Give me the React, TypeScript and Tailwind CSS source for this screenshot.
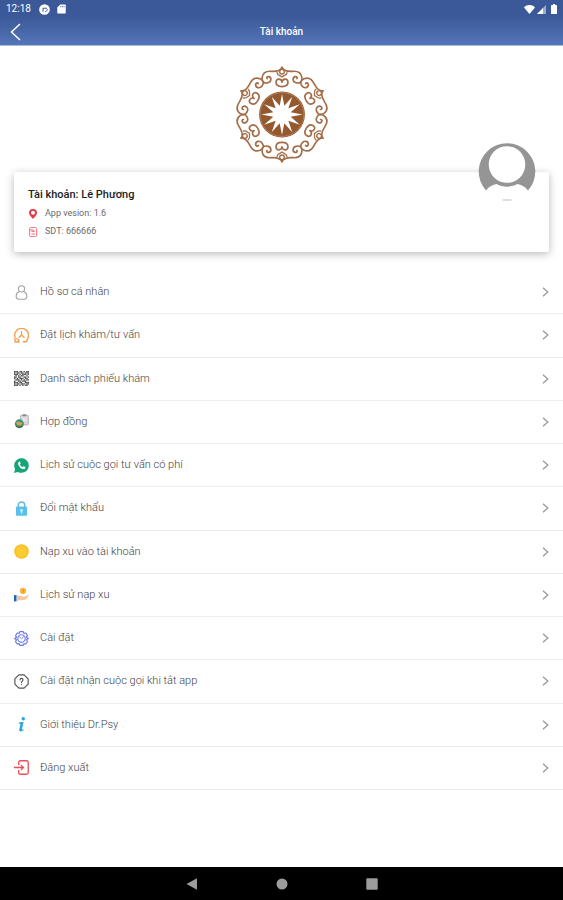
import type { ReactNode } from "react";

const SECTORS = [0, 60, 120, 180, 240, 300];

const starPoints = Array.from({ length: 24 }, (_, i) => {
  const r = i % 2 === 0 ? 62 : 27;
  const a = (i * Math.PI) / 12;
  return `${(Math.sin(a) * r).toFixed(1)},${(-Math.cos(a) * r).toFixed(1)}`;
}).join(" ");

function ScrollHalf() {
  return (
    <path d="M0-142C-6-128-22-130-32-130C-44-131-58-127-60-111C-61-98-54-94-45-95C-32-96-30-110-39-114C-45-115-47-111-45-108" />
  );
}

function Logo() {
  return (
    <svg viewBox="-144 -146 288 292" className="h-[97px] w-24" role="img" aria-label="Logo">
      <g fill="none" stroke="#a26d48" strokeWidth="5" strokeLinecap="round">
        {SECTORS.map((a) => (
          <g key={a} transform={`rotate(${a})`}>
            <ScrollHalf />
            <g transform="scale(-1 1)">
              <ScrollHalf />
            </g>
            <circle cy="-129" r="7" strokeWidth="4" />
            <path d="M-15-126C-14-117-5-117 0-113C5-117 14-117 15-126" strokeWidth="4" />
            <path d="M0-97C-1-108-18-111-18-97C-18-86-8-84 0-84C8-84 18-86 18-97C18-111 1-108 0-97" />
          </g>
        ))}
      </g>
      <circle r="69" fill="#95592f" />
      <circle r="66" fill="none" stroke="#b0805c" strokeWidth="3" />
      <polygon points={starPoints} fill="#fff" />
    </svg>
  );
}

function Icon({ children }: { children: ReactNode }) {
  return (
    <svg viewBox="0 0 14 14" className="size-[15px] shrink-0" fill="none" aria-hidden="true">
      {children}
    </svg>
  );
}

const QR_ROWS = [
  "11101101011",
  "10110110111",
  "11101011101",
  "01010110010",
  "11011001101",
  "10101110110",
  "01110101011",
  "10011011100",
  "11101100111",
  "10110111011",
  "11101010110",
];

const items: { label: string; icon: ReactNode }[] = [
  {
    label: "Hồ sơ cá nhân",
    icon: (
      <g stroke="#a3a3a3" strokeWidth="1">
        <circle cx="7" cy="3.6" r="2.9" />
        <path d="M4.6 6.4C2.6 7.2 2 8.8 2 10.6C2 12.6 3 13.3 4.4 13.3H9.6C11 13.3 12 12.6 12 10.6C12 8.8 11.4 7.2 9.4 6.4" />
      </g>
    ),
  },
  {
    label: "Đặt lịch khám/tư vấn",
    icon: (
      <g stroke="#f5a04f" strokeWidth="1.3" strokeLinecap="round" strokeLinejoin="round">
        <path d="M1 8.4C.2 5.8 1 3.4 3 1.8C5.4.1 8.8.1 11.2 1.8C13.6 3.6 13.8 7 13 9.4C12.6 10.6 12.2 11.4 11.6 12.4" />
        <path d="M7 3.4V6.6L4.8 8.6M7 6.6L9.4 8.6" />
        <path d="M1 9.6V13H4.6C4.8 11.4 4 10.4 2.6 10.2" />
        <path d="M8.6 12.8H11.4" />
      </g>
    ),
  },
  {
    label: "Danh sách phiếu khám",
    icon: (
      <g fill="#4a4a4a">
        {QR_ROWS.map((row, y) =>
          row.split("").map((c, x) =>
            c === "1" ? <rect key={`${x}-${y}`} x={x * 1.27} y={y * 1.27} width="1.27" height="1.27" /> : null,
          ),
        )}
      </g>
    ),
  },
  {
    label: "Hợp đồng",
    icon: (
      <g>
        <rect x="6" y="1.2" width="7.4" height="9" rx="0.8" fill="#d9d5da" stroke="#a9a3ab" strokeWidth="0.7" />
        <rect x="8" y="0.3" width="3.4" height="1.8" rx="0.6" fill="#8f878f" />
        <path d="M8 4.4H12M8 6.2H12" stroke="#f6f6f6" strokeWidth="0.8" />
        <circle cx="5" cy="9.2" r="4.2" fill="#2f9a6c" />
        <path d="M1.8 8.2L4.4 6.8L8.2 8.6L6 10.8L3.4 10.4Z" fill="#dd9a63" />
        <path d="M2 11.4C3.6 12.4 6.4 12.4 8 11.2" stroke="#8b3b3b" strokeWidth="0.8" />
      </g>
    ),
  },
  {
    label: "Lịch sử cuộc gọi tư vấn có phí",
    icon: (
      <g>
        <path d="M.1 13.9L1 10.3A6.8 6.8 0 1 1 3.7 13Z" fill="#16a577" />
        <path
          d="M4.6 3.5C5.2 3.1 5.6 3.4 5.8 4L6.2 5C6.3 5.5 5.6 5.9 5.6 6.2C6.1 7.3 7 8 8 8.4C8.4 8.3 8.7 7.5 9.2 7.7L10.4 8.3C11 8.7 10.6 9.7 9.9 10.1C8.8 10.8 7 10 5.7 8.8C4.4 7.6 3.7 6.2 3.8 5C3.8 4.4 4.1 3.8 4.6 3.5Z"
          fill="#fff"
        />
      </g>
    ),
  },
  {
    label: "Đổi mật khẩu",
    icon: (
      <g>
        <path d="M4 6V3.8C4 0 10 0 10 3.8V6" stroke="#5fb9df" strokeWidth="1.4" />
        <rect x="1.8" y="5.2" width="10.4" height="8.6" rx="0.7" fill="#5cc1ea" />
        <circle cx="7" cy="8.6" r="1.2" fill="#d6f0fa" />
        <path d="M6.4 9H7.6V11.6H6.4Z" fill="#d6f0fa" />
      </g>
    ),
  },
  {
    label: "Nạp xu vào tài khoản",
    icon: (
      <g>
        <circle cx="7" cy="7" r="6.8" fill="#f6bf2c" />
        <circle cx="7" cy="7" r="5.4" fill="#fccb32" />
      </g>
    ),
  },
  {
    label: "Lịch sử nạp xu",
    icon: (
      <g>
        <circle cx="8.4" cy="3.6" r="3" fill="#f9b53e" />
        <path d="M8.6 2.2V5" stroke="#ef8e2c" strokeWidth="1" />
        <path d="M0 7.6H2.4V13.4H0Z" fill="#1f62b4" />
        <path d="M2.4 7.6H3.4V13H2.4Z" fill="#8fc4ee" />
        <path d="M3.4 8.4C5 7.6 6.4 8.6 8.8 9C10.4 9.2 12.2 7.6 13.8 7.2C13.4 9.4 11.6 11.8 9 12.2C7 12.5 5 12.3 3.4 12.4Z" fill="#f5c6a0" />
      </g>
    ),
  },
  {
    label: "Cài đặt",
    icon: (
      <g stroke="#6a79e6" strokeWidth="1.1" strokeLinejoin="round">
        <path d="M5.4.6H8.6L9.2 2.2L11 1.9L12.6 4.4L11.6 5.8L13.4 7L11.6 8.2L12.6 9.8L11 12.1L9.2 11.8L8.6 13.4H5.4L4.8 11.8L3 12.1L1.4 9.8L2.4 8.2L.6 7L2.4 5.8L1.4 4.4L3 1.9L4.8 2.2Z" />
        <circle cx="7" cy="7" r="3.5" />
        <path d="M4.6 5L7 7.2L9.4 5" strokeWidth="0.8" />
      </g>
    ),
  },
  {
    label: "Cài đặt nhận cuộc gọi khi tắt app",
    icon: (
      <g stroke="#555" strokeWidth="1.1" strokeLinecap="round">
        <path d="M4.6.8H9.4L13.2 4.6V9.4L9.4 13.2H4.6L.8 9.4V4.6Z" strokeLinejoin="round" />
        <path d="M5.6 5.4C5.6 3.6 8.4 3.6 8.4 5.4C8.4 6.6 7 6.6 7 8M7 9.8V9.9" />
      </g>
    ),
  },
  {
    label: "Giới thiệu Dr.Psy",
    icon: (
      <g fill="#2aa5e0">
        <circle cx="8.6" cy="1.7" r="1.6" />
        <path d="M4.6 5.2L9 4.4L7.4 11.2C7.3 12 8 11.8 9 11.2L8.8 12.4C7.6 13.6 4.6 14.2 4.9 11.8L6 6.6L4.5 6Z" />
      </g>
    ),
  },
  {
    label: "Đăng xuất",
    icon: (
      <g stroke="#ee4b52" strokeWidth="1.2" strokeLinecap="round" strokeLinejoin="round">
        <path d="M4.4 4.2V2.2C4.4 1.2 5 .7 6 .7H11.6C12.8.7 13.3 1.3 13.3 2.4V11.6C13.3 12.7 12.8 13.3 11.6 13.3H6C5 13.3 4.4 12.8 4.4 11.8V9.8" />
        <path d="M.4 7H8.8M6.8 5L8.8 7L6.8 9" />
      </g>
    ),
  },
];

function StatusBar() {
  return (
    <div className="flex h-[18px] items-center px-[6px] text-white">
      <span className="text-[10px] leading-[18px]">12:18</span>
      <svg viewBox="0 0 12 12" className="ml-[8px] size-[11px]" aria-hidden="true">
        <circle cx="6" cy="6" r="5.8" fill="#fff" />
        <path d="M4.4 8.4V4.6H8.6" fill="none" stroke="#3c5a9b" strokeWidth="1.1" />
        <path d="M6.6 8.6C8.4 8.2 9.2 7 9 5.4" fill="none" stroke="#3c5a9b" strokeWidth="1" />
      </svg>
      <svg viewBox="0 0 10 11" className="ml-[7px] h-[10px] w-[9px]" aria-hidden="true">
        <path d="M3.6.5H9Q9.7.5 9.7 1.2V9.8Q9.7 10.5 9 10.5H1Q.3 10.5.3 9.8V3.8Z" fill="#fff" />
        <path d="M4.2 2V3.6M6 2V3.6M7.8 2V3.6" stroke="#3c5a9b" strokeWidth="0.8" />
      </svg>
      <div className="ml-auto flex items-center gap-[2px]">
        <svg viewBox="0 0 11 9" className="h-[9px] w-[11px]" aria-hidden="true">
          <path d="M0 2.4C3-.7 8-.7 11 2.4L5.5 9Z" fill="#fff" />
        </svg>
        <svg viewBox="0 0 9 9" className="size-[9px]" aria-hidden="true">
          <path d="M0 9L9 0V9Z" fill="#fff" fillOpacity="0.5" />
          <path d="M0 9L6 3V9Z" fill="#fff" />
        </svg>
        <svg viewBox="0 0 6 10" className="ml-[3px] h-[10px] w-[6px]" aria-hidden="true">
          <path d="M2 0H4V1H5.4Q6 1 6 1.6V9.4Q6 10 5.4 10H.6Q0 10 0 9.4V1.6Q0 1 .6 1H2Z" fill="#fff" />
        </svg>
      </div>
    </div>
  );
}

export default function App() {
  return (
    <div className="flex min-h-screen flex-col bg-white font-['Roboto','Noto_Sans',sans-serif] text-[#3f3f3f]">
      <header className="bg-linear-to-b from-[#3b5998] from-35% to-[#5676ba]">
        <StatusBar />
        <div className="grid h-[28px] grid-cols-[1fr_auto_1fr] items-center border-b border-[#a9bade] px-[10px]">
          <button type="button" aria-label="Quay lại" className="justify-self-start">
            <svg viewBox="0 0 11 18" className="h-[18px] w-[11px]" fill="none" aria-hidden="true">
              <path d="M10 1L1.5 9L10 17" stroke="#fff" strokeWidth="1.5" />
            </svg>
          </button>
          <h1 className="text-[10px] leading-4 font-medium text-white">Tài khoản</h1>
        </div>
      </header>

      <main className="flex-1">
        <div className="flex justify-center pt-5">
          <Logo />
        </div>

        <section className="relative mx-[14px] mt-[9px] rounded-[2px] bg-white px-[14px] pt-[14px] pb-[11px] shadow-[0_2px_8px_rgba(0,0,0,0.28)]">
          <h2 className="text-[11px] leading-[18px] font-medium text-[#222]">Tài khoản: Lê Phương</h2>
          <p className="flex h-[19px] items-center gap-[7px] text-[9px] text-[#6a6a6a]">
            <svg viewBox="0 0 10 10" className="size-[10px]" aria-hidden="true">
              <path
                d="M5 10C3.4 7.8 1 6.4 1 3.8A4 3.8 0 0 1 9 3.8C9 6.4 6.6 7.8 5 10ZM5 1.8A2 2 0 1 0 5 5.8A2 2 0 1 0 5 1.8Z"
                fill="#ea3843"
                fillRule="evenodd"
              />
            </svg>
            App vesion: 1.6
          </p>
          <p className="flex h-[18px] items-center gap-[7px] text-[9px] text-[#6a6a6a]">
            <svg viewBox="0 0 10 10" className="size-[10px]" fill="none" stroke="#f0646c" strokeWidth="0.9" aria-hidden="true">
              <rect x="1.6" y="0.6" width="7" height="8.8" rx="1" />
              <path d="M1.6 3H5.4L6.6 4.4H3.4M3.4 7H7" />
            </svg>
            SDT: 666666
          </p>
          <svg
            viewBox="0 0 58 60"
            className="absolute -top-[30px] right-[13px] h-[60px] w-[58px]"
            role="img"
            aria-label="Ảnh đại diện"
          >
            <circle cx="29" cy="30" r="28" fill="#fff" />
            <path
              d="M8 48.5A28.3 28.3 0 1 1 50 48.5C47 44.5 43 42.5 39.5 42C33 45.5 25 45.5 18.5 42C15 42.5 11 44.5 8 48.5Z"
              fill="#959595"
            />
            <circle cx="29" cy="22.5" r="18.3" fill="#fff" />
            <path d="M24.5 58H33.5" fill="none" stroke="#bbb" strokeWidth="1" />
          </svg>
        </section>

        <ul className="mt-[19px] grid h-[519px] auto-rows-fr">
          {items.map((item) => (
            <li key={item.label} className="border-b border-[#ededed]">
              <button type="button" className="flex h-full w-full items-center px-[14px] text-left">
                <Icon>{item.icon}</Icon>
                <span className="ml-[11px] flex-1 text-[11px] leading-4 font-light">{item.label}</span>
                <svg viewBox="0 0 7 10" className="h-[10px] w-[7px]" fill="none" aria-hidden="true">
                  <path d="M1 .7L5.8 5L1 9.3" stroke="#999" strokeWidth="1.3" />
                </svg>
              </button>
            </li>
          ))}
        </ul>
      </main>

      <nav className="flex h-[33px] items-center justify-center gap-[78px] bg-black">
        <button type="button" aria-label="Trở lại">
          <svg viewBox="0 0 12 12" className="size-3" aria-hidden="true">
            <path d="M.5 6L11 .3V11.7Z" fill="#9c9c9c" />
          </svg>
        </button>
        <button type="button" aria-label="Màn hình chính">
          <svg viewBox="0 0 12 12" className="size-3" aria-hidden="true">
            <circle cx="6" cy="6" r="5.5" fill="#9c9c9c" />
          </svg>
        </button>
        <button type="button" aria-label="Ứng dụng gần đây">
          <svg viewBox="0 0 12 12" className="size-3" aria-hidden="true">
            <rect x="0.3" y="0.3" width="11.4" height="11.4" rx="0.8" fill="#9c9c9c" />
          </svg>
        </button>
      </nav>
    </div>
  );
}
